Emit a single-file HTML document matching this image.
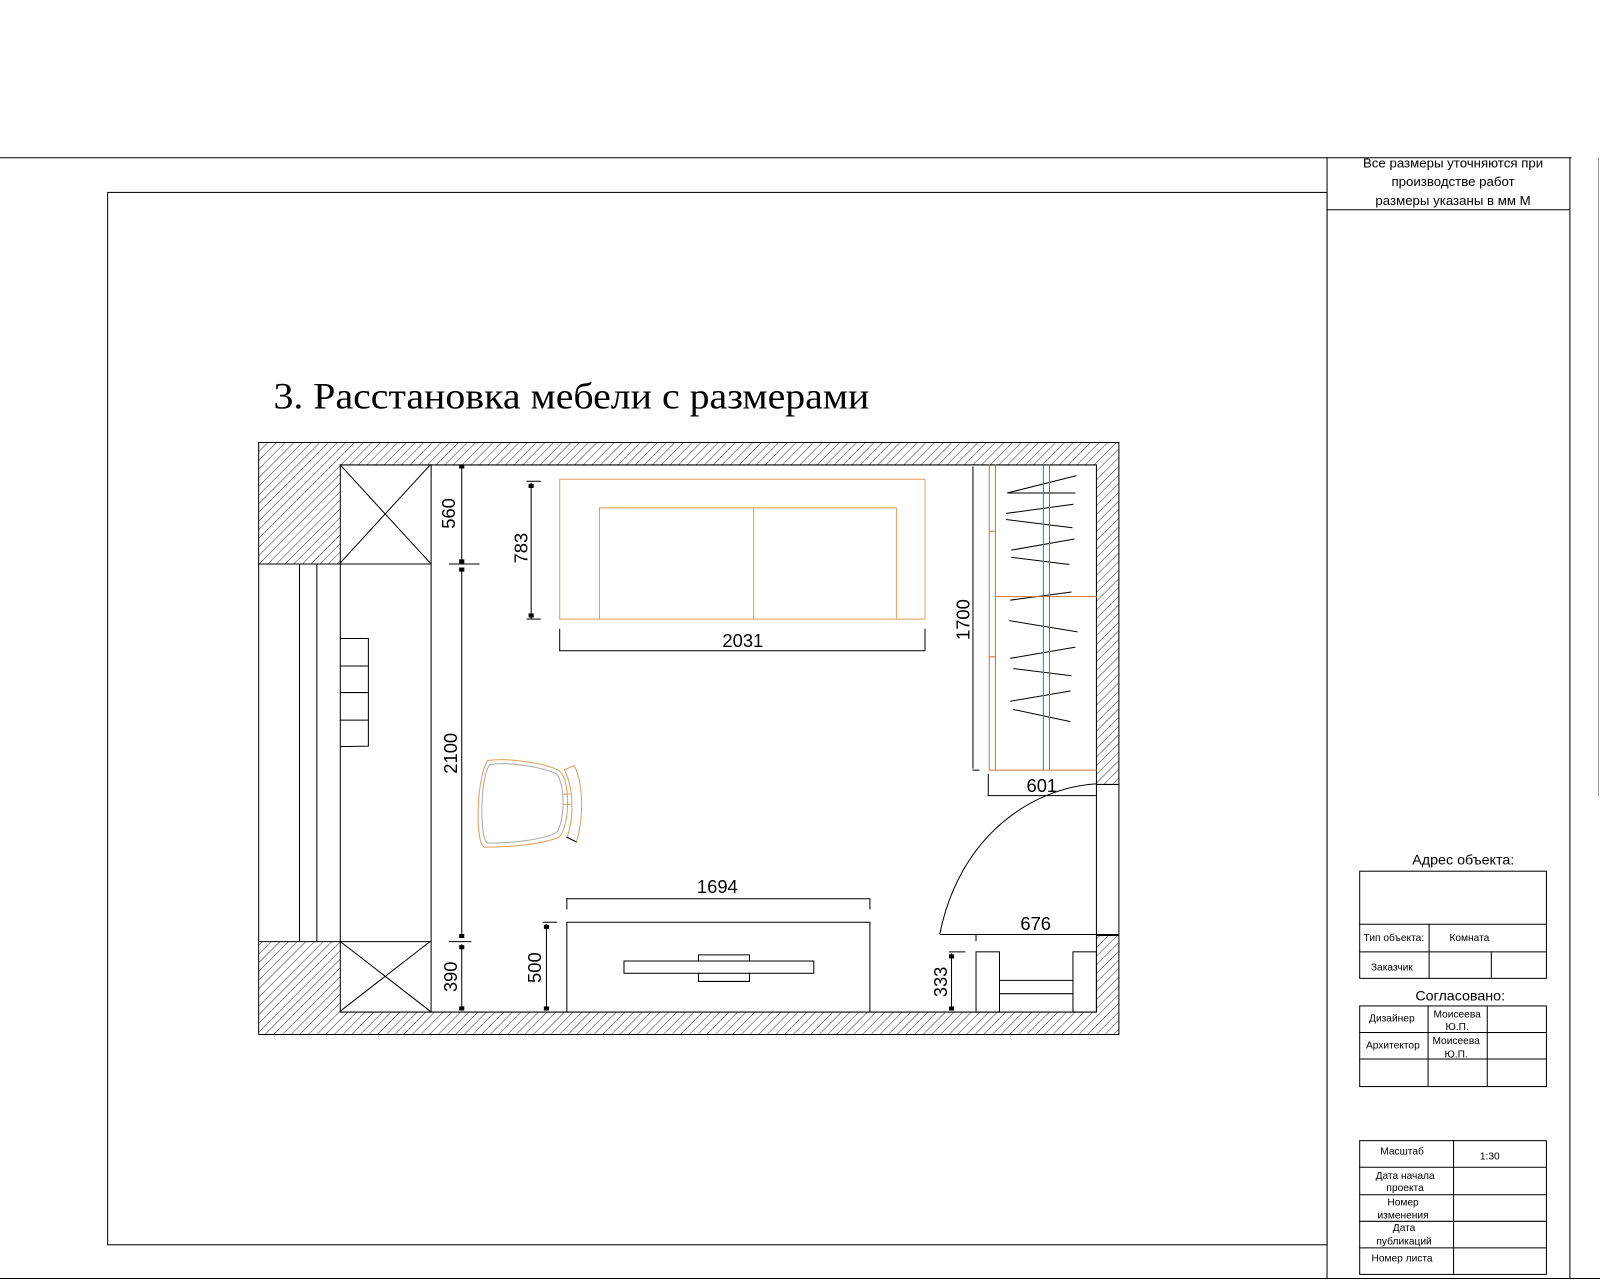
<!DOCTYPE html>
<html><head><meta charset="utf-8"><style>
html,body{margin:0;padding:0;background:#fff;width:1600px;height:1280px;overflow:hidden}
svg{display:block}
.t{font-family:"Liberation Sans",sans-serif;fill:#000}
.s{font-family:"Liberation Serif",serif;fill:#000}
</style></head><body>
<svg width="1600" height="1280" viewBox="0 0 1568 1254" preserveAspectRatio="none" xmlns="http://www.w3.org/2000/svg">
<defs>
<pattern id="h" width="6" height="6" patternUnits="userSpaceOnUse" patternTransform="rotate(45)">
<line x1="0" y1="0" x2="0" y2="6" stroke="#000" stroke-width="0.8"/>
</pattern>
</defs>
<g fill="none" stroke="#000" stroke-width="1">
<line x1="0" y1="154.5" x2="1540" y2="154.5"/>
<rect x="105.5" y="188.5" width="1195" height="1031"/>
<line x1="1300.5" y1="154" x2="1300.5" y2="1253"/>
<line x1="1538.5" y1="154" x2="1538.5" y2="1253"/>
<line x1="1300" y1="205.5" x2="1538" y2="205.5"/>
<line x1="0" y1="1252.5" x2="1568" y2="1252.5"/>
<line x1="1566.5" y1="154" x2="1566.5" y2="780" stroke="#999"/>
<rect x="1332.5" y="853.5" width="183" height="105"/>
<line x1="1332" y1="905.5" x2="1515" y2="905.5"/>
<line x1="1332" y1="932.5" x2="1515" y2="932.5"/>
<line x1="1400.5" y1="905" x2="1400.5" y2="958"/>
<line x1="1461.5" y1="932" x2="1461.5" y2="958"/>
<rect x="1332.5" y="985.5" width="183" height="79"/>
<line x1="1332" y1="1011.5" x2="1515" y2="1011.5"/>
<line x1="1332" y1="1037.5" x2="1515" y2="1037.5"/>
<line x1="1399.5" y1="985" x2="1399.5" y2="1064"/>
<line x1="1457.5" y1="985" x2="1457.5" y2="1064"/>
<rect x="1332.5" y="1117.5" width="183" height="131"/>
<line x1="1332" y1="1143.5" x2="1515" y2="1143.5"/>
<line x1="1332" y1="1170.5" x2="1515" y2="1170.5"/>
<line x1="1332" y1="1196.5" x2="1515" y2="1196.5"/>
<line x1="1332" y1="1222.5" x2="1515" y2="1222.5"/>
<line x1="1424.5" y1="1117" x2="1424.5" y2="1248"/>
</g>
<!-- walls hatch -->
<path fill="url(#h)" stroke="none" d="M253.5 433.5H1096.5V768.5H1074.5V455.5H333.5V552.5H253.5Z M253.5 922.5H333.5V991.5H1074.5V916.5H1096.5V1013.5H253.5Z"/>
<path fill="none" stroke="#000" stroke-width="1" d="M253.5 433.5H1096.5V768.5H1074.5V455.5H333.5V552.5H253.5Z M253.5 922.5H333.5V991.5H1074.5V916.5H1096.5V1013.5H253.5Z"/>
<g fill="none" stroke="#000" stroke-width="1">
<line x1="253.5" y1="552" x2="253.5" y2="922"/>
<line x1="333.5" y1="552" x2="333.5" y2="922"/>
<line x1="293.5" y1="552" x2="293.5" y2="922"/>
<line x1="310.5" y1="552" x2="310.5" y2="922"/>
<line x1="1074.5" y1="768" x2="1074.5" y2="916"/>
<line x1="1096.5" y1="768" x2="1096.5" y2="916"/>
<line x1="422.5" y1="455" x2="422.5" y2="991"/>
<line x1="333" y1="552.5" x2="422" y2="552.5"/>
<line x1="333" y1="922.5" x2="422" y2="922.5"/>
<line x1="333" y1="455" x2="422" y2="552"/><line x1="422" y1="455" x2="333" y2="552"/>
<line x1="333" y1="922" x2="422" y2="991"/><line x1="422" y1="922" x2="333" y2="991"/>
<path d="M333 625.5H361V705M333 652.5H361M333 678.5H361M333 705.5H361V731L333 731.5"/>
<line x1="452.5" y1="456" x2="452.5" y2="551"/>
<line x1="452.5" y1="556" x2="452.5" y2="919"/>
<line x1="452.5" y1="925" x2="452.5" y2="990"/>
<line x1="440" y1="552.5" x2="470" y2="552.5"/>
<line x1="440" y1="922.5" x2="462" y2="922.5"/>
<line x1="520.5" y1="473" x2="520.5" y2="606"/>
<line x1="516" y1="471.5" x2="530" y2="471.5"/>
<line x1="516" y1="606.5" x2="530" y2="606.5"/>
<line x1="548" y1="637.5" x2="906" y2="637.5"/>
<line x1="548.5" y1="616" x2="548.5" y2="638"/>
<line x1="906.5" y1="616" x2="906.5" y2="638"/>
<line x1="555" y1="880.5" x2="852" y2="880.5"/>
<line x1="555.5" y1="880" x2="555.5" y2="891"/>
<line x1="852.5" y1="880" x2="852.5" y2="891"/>
<path d="M555.5 991V903.5H852.5V991"/>
<rect x="611.5" y="941.5" width="186" height="12"/>
<path d="M684.5 941V935.5H734.5V941M684.5 953V961.5H734.5V953"/>
<line x1="535.5" y1="905" x2="535.5" y2="990"/>
<line x1="532" y1="903.5" x2="546" y2="903.5"/>
<line x1="953.5" y1="457" x2="953.5" y2="753"/>
<line x1="953" y1="455.5" x2="960" y2="455.5"/>
<line x1="953" y1="754.5" x2="960" y2="754.5"/>
<line x1="968" y1="779.5" x2="1074" y2="779.5"/>
<line x1="968.5" y1="758" x2="968.5" y2="780"/>
<path d="M1074 768 C1010 772 940 820 921 915"/>
<line x1="921" y1="915.5" x2="1096" y2="915.5"/>
<line x1="956.5" y1="916" x2="956.5" y2="922"/>
<line x1="932.5" y1="934" x2="932.5" y2="990"/>
<line x1="930" y1="932.5" x2="946" y2="932.5"/>
<rect x="956.5" y="932.5" width="23" height="59"/>
<rect x="1051.5" y="932.5" width="23" height="59"/>
<line x1="979" y1="960.5" x2="1051" y2="960.5"/>
<line x1="979" y1="973.5" x2="1051" y2="973.5"/>
<path d="M987 483L1055 466M987 483L1054 483M986 503L1052 494M986 509L1051 517M991 539L1053 528M991 546L1048 553M990 588L1050 580M989 608L1056 619M990 645L1054 634M993 655L1050 662M990 687L1049 677M993 695L1049 707"/>
</g>
<g fill="#000">
<rect x="450" y="455" width="5" height="4"/><rect x="450" y="548" width="5" height="4"/>
<rect x="450" y="556" width="5" height="4"/><rect x="450" y="915" width="5" height="4"/>
<rect x="450" y="926" width="5" height="4"/><rect x="450" y="986" width="5" height="4"/>
<rect x="518" y="474" width="5" height="4"/><rect x="518" y="601" width="5" height="4"/>
<rect x="533" y="906" width="5" height="4"/><rect x="533" y="986" width="5" height="4"/>
<rect x="930" y="935" width="5" height="4"/><rect x="930" y="986" width="5" height="4"/>
</g>
<g fill="none" stroke="#e0a060" stroke-width="1">
<rect x="548.5" y="469.5" width="358" height="137"/>
<path d="M587.5 606V497.5H878.5V606"/>
<line x1="738.5" y1="497" x2="738.5" y2="606"/>
<path d="M478 745 C500 742 535 748 548 755 C560 765 558 810 548 820 C530 828 495 830 475 830 C465 828 467 760 478 745Z"/>
<path d="M480 749 C500 746 532 752 545 758 C555 768 553 808 545 816 C528 824 495 826 478 826 C470 824 470 762 480 749Z" stroke="#aaa"/>
<path d="M553 754L563 750C572 770 572 800 565 825L556 820C563 798 562 772 553 754Z"/>
<line x1="552" y1="778" x2="559" y2="778"/><line x1="552" y1="788" x2="559" y2="788"/>
</g>
<line x1="555" y1="820" x2="565" y2="825" stroke="#000"/>
<g fill="none" stroke="#c8743a" stroke-width="1">
<line x1="969.5" y1="455" x2="969.5" y2="754"/>
<line x1="975.5" y1="455" x2="975.5" y2="754"/>
<line x1="975" y1="584.5" x2="1075" y2="584.5"/>
<line x1="969" y1="754.5" x2="1075" y2="754.5"/>
<line x1="969" y1="520.5" x2="975" y2="520.5"/>
<line x1="969" y1="643.5" x2="975" y2="643.5"/>
</g>
<g stroke="#3a7ac0" stroke-width="1">
<line x1="1022.5" y1="455" x2="1022.5" y2="754"/>
<line x1="1028.5" y1="455" x2="1028.5" y2="754"/>
</g>
<text class="s" x="268" y="400" font-size="36" textLength="584" lengthAdjust="spacingAndGlyphs">3. Расстановка мебели с размерами</text>
<g text-anchor="middle">
<text transform="translate(446,503) rotate(-90)" class="t" font-size="18">560</text>
<text transform="translate(448,738) rotate(-90)" class="t" font-size="18">2100</text>
<text transform="translate(448,957) rotate(-90)" class="t" font-size="18">390</text>
<text transform="translate(517,537) rotate(-90)" class="t" font-size="18">783</text>
<text transform="translate(530,948) rotate(-90)" class="t" font-size="18">500</text>
<text transform="translate(950,607) rotate(-90)" class="t" font-size="18">1700</text>
<text transform="translate(928,962) rotate(-90)" class="t" font-size="18">333</text>
<text x="728" y="634" class="t" font-size="18">2031</text>
<text x="703" y="875" class="t" font-size="18">1694</text>
<text x="1021" y="776" class="t" font-size="18">601</text>
<text x="1015" y="911" class="t" font-size="18">676</text>
</g>
<g class="t" text-anchor="middle">
<text x="1424" y="164" font-size="13">Все размеры уточняются при</text>
<text x="1424" y="182" font-size="13">производстве работ</text>
<text x="1424" y="201" font-size="13">размеры указаны в мм М</text>
<text x="1434" y="847" font-size="14">Адрес объекта:</text>
<text x="1366" y="922" font-size="10">Тип объекта:</text>
<text x="1440" y="922" font-size="10">Комната</text>
<text x="1364" y="951" font-size="10">Заказчик</text>
<text x="1431" y="980" font-size="14">Согласовано:</text>
<text x="1364" y="1001" font-size="10">Дизайнер</text>
<text x="1428" y="997" font-size="10">Моисеева</text>
<text x="1428" y="1009" font-size="10">Ю.П.</text>
<text x="1365" y="1027" font-size="10">Архитектор</text>
<text x="1427" y="1023" font-size="10">Моисеева</text>
<text x="1427" y="1036" font-size="10">Ю.П.</text>
<text x="1374" y="1131" font-size="10">Масштаб</text>
<text x="1460" y="1136" font-size="10">1:30</text>
<text x="1377" y="1155" font-size="10">Дата начала</text>
<text x="1377" y="1167" font-size="10">проекта</text>
<text x="1375" y="1181" font-size="10">Номер</text>
<text x="1375" y="1194" font-size="10">изменения</text>
<text x="1376" y="1206" font-size="10">Дата</text>
<text x="1376" y="1219" font-size="10">публикаций</text>
<text x="1374" y="1236" font-size="10">Номер листа</text>
</g>
</svg>
</body></html>
